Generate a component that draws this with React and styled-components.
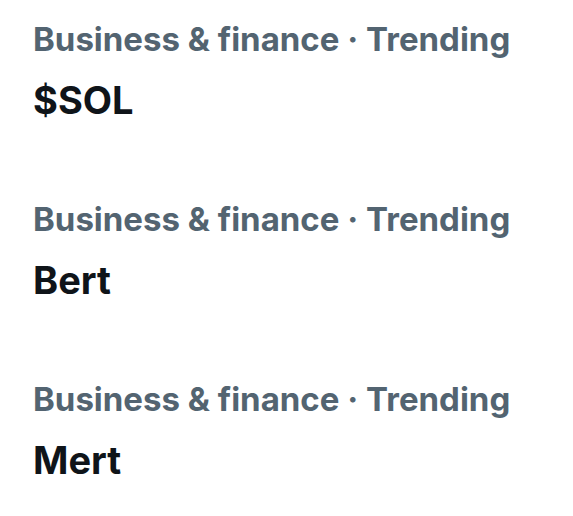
import React from 'react';
import styled, { createGlobalStyle } from 'styled-components';

const GlobalStyle = createGlobalStyle`
	html, body {
		margin: 0;
		padding: 0;
		background: #ffffff;
	}
	body {
		font-family: Inter, "Noto Sans", sans-serif;
		-webkit-font-smoothing: antialiased;
	}
`;

const trends = [
	{ category: 'Business & finance', title: '$SOL' },
	{ category: 'Business & finance', title: 'Bert' },
	{ category: 'Business & finance', title: 'Mert' },
];

const App = () => {
	return (
		<>
			<GlobalStyle />
			<List>
				{trends.map((trend, idx) => (
					<Trend key={idx}>
						<Meta>{trend.category} · Trending</Meta>
						<Title>{trend.title}</Title>
					</Trend>
				))}
			</List>
		</>
	);
};

export default App;

const List = styled.div`
	display: flex;
	flex-direction: column;
	padding: 0 33px;
	width: 573px;
	box-sizing: border-box;
`;

const Trend = styled.div`
	display: flex;
	flex-direction: column;
	gap: 18px;
	height: 180px;
	padding-top: 19px;
	box-sizing: border-box;
`;

const Meta = styled.div`
	font-size: 33px;
	line-height: 40px;
	font-weight: 700;
	color: #536471;
	white-space: nowrap;
	font-variant-ligatures: none;
`;

const Title = styled.div`
	font-size: 38px;
	line-height: 46px;
	font-weight: 700;
	color: #0f1419;
`;
